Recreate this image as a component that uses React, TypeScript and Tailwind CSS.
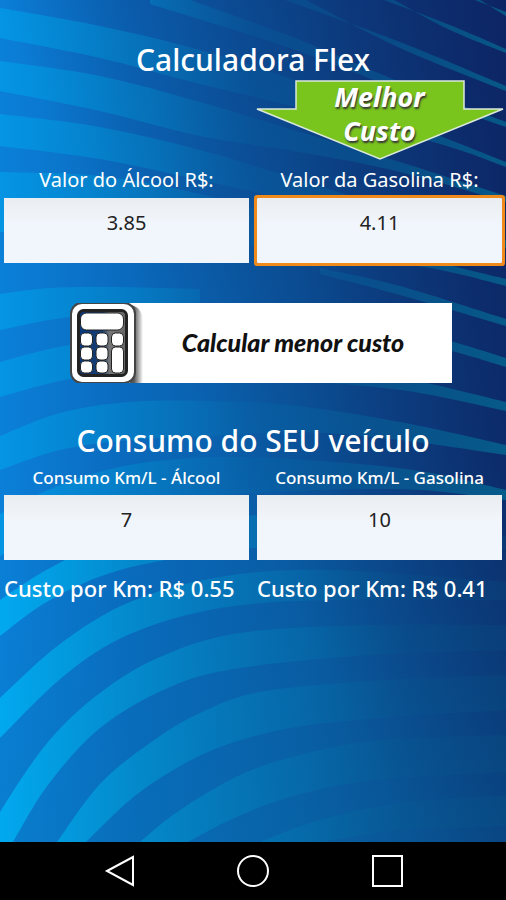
import { useState, type ReactNode } from "react";

type Point = [number, number];

const hand = "font-['Noto_Sans','Open_Sans',sans-serif]";

// Each stripe is described by its upper and lower edge, left to right.
const stripes: { top: Point[]; bottom: Point[] }[] = [
  { top: [[475, 0], [506, 12]], bottom: [[480, 0], [506, 16]] },
  { top: [[384, 0], [450, 25], [506, 49]], bottom: [[394, 0], [450, 30], [506, 53]] },
  { top: [[285, 0], [400, 42], [506, 86]], bottom: [[306, 0], [400, 48], [506, 91]] },
  { top: [[150, -14], [290, 36], [400, 82], [506, 122]], bottom: [[150, 4], [290, 48], [400, 90], [506, 127]] },
  { top: [[0, 8], [100, 26], [200, 50], [300, 82], [440, 136], [506, 162]], bottom: [[0, 38], [100, 58], [200, 84], [300, 108], [440, 144], [506, 167]] },
  { top: [[0, 61], [100, 76], [200, 102], [300, 132], [400, 162], [506, 196]], bottom: [[0, 91], [100, 111], [200, 136], [300, 152], [400, 172], [506, 202]] },
  { top: [[0, 114], [100, 127], [200, 150], [300, 180], [420, 218], [506, 240]], bottom: [[0, 146], [100, 159], [200, 180], [300, 202], [420, 228], [506, 248]] },
  { top: [[0, 172], [100, 176], [200, 194], [320, 228], [430, 260], [506, 279]], bottom: [[0, 232], [100, 232], [200, 240], [320, 254], [430, 268], [506, 286]] },
  { top: [[0, 294], [50, 288], [110, 287], [200, 289]], bottom: [[0, 330], [70, 317], [140, 316], [200, 316]] },
  { top: [[320, 268], [400, 286], [506, 319]], bottom: [[320, 274], [400, 295], [506, 326]] },
  { top: [[250, 310], [350, 315], [440, 338], [506, 358]], bottom: [[250, 330], [350, 330], [440, 348], [506, 367]] },
  { top: [[0, 362], [70, 345], [150, 340], [260, 350], [400, 377], [506, 402]], bottom: [[0, 397], [70, 379], [150, 372], [260, 378], [400, 390], [506, 411]] },
  { top: [[0, 436], [60, 413], [130, 402], [210, 401], [290, 405], [400, 422], [506, 445]], bottom: [[0, 470], [60, 450], [130, 440], [210, 436], [300, 432], [400, 440], [506, 455]] },
  { top: [[0, 514], [60, 485], [130, 465], [220, 457], [320, 461], [420, 471], [506, 490]], bottom: [[0, 556], [60, 526], [130, 505], [220, 495], [320, 490], [420, 490], [506, 500]] },
  { top: [[0, 600], [50, 568], [120, 536], [220, 518], [330, 516], [506, 536]], bottom: [[0, 636], [50, 600], [120, 570], [220, 552], [330, 544], [506, 550]] },
  { top: [[0, 698], [60, 644], [130, 602], [220, 577], [330, 570], [506, 582]], bottom: [[0, 738], [65, 675], [130, 634], [220, 608], [330, 600], [506, 600]] },
  { top: [[-14, 842], [0, 812], [48, 742], [100, 693], [160, 657], [240, 633], [370, 625], [506, 625]], bottom: [[13, 842], [48, 785], [100, 728], [170, 687], [240, 668], [370, 655], [506, 650]] },
  { top: [[57, 842], [100, 784], [150, 743], [200, 713], [260, 692], [370, 681], [506, 675]], bottom: [[86, 842], [130, 800], [170, 772], [220, 747], [290, 728], [380, 718], [506, 710]] },
  { top: [[140, 842], [180, 810], [240, 775], [300, 755], [380, 740], [506, 735]], bottom: [[188, 842], [230, 820], [280, 800], [340, 785], [400, 778], [506, 772]] },
  { top: [[260, 842], [320, 820], [400, 803], [506, 795]], bottom: [[320, 842], [400, 830], [450, 828], [506, 826]] },
];

function curve(points: Point[]) {
  let d = "";
  for (let i = 0; i < points.length - 1; i++) {
    const before = points[Math.max(i - 1, 0)];
    const from = points[i];
    const to = points[i + 1];
    const after = points[Math.min(i + 2, points.length - 1)];
    d += `C${from[0] + (to[0] - before[0]) / 6} ${from[1] + (to[1] - before[1]) / 6} `;
    d += `${to[0] - (after[0] - from[0]) / 6} ${to[1] - (after[1] - from[1]) / 6} ${to[0]} ${to[1]}`;
  }
  return d;
}

function outline({ top, bottom }: { top: Point[]; bottom: Point[] }) {
  const back = [...bottom].reverse();
  return `M${top[0].join(" ")}${curve(top)}L${back[0].join(" ")}${curve(back)}Z`;
}

function Backdrop() {
  return (
    <svg aria-hidden="true" viewBox="0 0 506 842" preserveAspectRatio="none" className="absolute inset-0 -z-10 h-full w-full">
      <defs>
        <linearGradient id="base" x1="0" y1="0" x2="1" y2="0">
          <stop offset="0" stopColor="#0b80d9" />
          <stop offset="0.25" stopColor="#0a6abd" />
          <stop offset="0.6" stopColor="#0a589f" />
          <stop offset="0.85" stopColor="#0b4283" />
          <stop offset="1" stopColor="#0b3370" />
        </linearGradient>
        <linearGradient id="night" x1="0.4" y1="0.5" x2="1" y2="0">
          <stop offset="0" stopColor="#0e1f60" stopOpacity="0" />
          <stop offset="1" stopColor="#0e1f60" stopOpacity="0.7" />
        </linearGradient>
        <linearGradient id="sea" x1="0" y1="0" x2="0" y2="1">
          <stop offset="0.55" stopColor="#0478c0" stopOpacity="0" />
          <stop offset="1" stopColor="#0478b4" stopOpacity="0.3" />
        </linearGradient>
        <linearGradient id="stripe" gradientUnits="userSpaceOnUse" x1="0" y1="0" x2="506" y2="0">
          <stop offset="0" stopColor="#00a0ea" stopOpacity="0.65" />
          <stop offset="0.3" stopColor="#0090cc" stopOpacity="0.38" />
          <stop offset="0.5" stopColor="#0078b0" stopOpacity="0.15" />
          <stop offset="0.7" stopColor="#007cae" stopOpacity="0.25" />
          <stop offset="1" stopColor="#008aa8" stopOpacity="0.5" />
        </linearGradient>
        <linearGradient id="fading" gradientUnits="userSpaceOnUse" x1="0" y1="0" x2="506" y2="0">
          <stop offset="0" stopColor="#00b0f4" stopOpacity="0.85" />
          <stop offset="0.3" stopColor="#009cd4" stopOpacity="0.55" />
          <stop offset="0.6" stopColor="#0080b4" stopOpacity="0.28" />
          <stop offset="0.8" stopColor="#007090" stopOpacity="0.08" />
          <stop offset="1" stopColor="#007090" stopOpacity="0.12" />
        </linearGradient>
      </defs>
      <rect width="506" height="842" fill="url(#base)" />
      <rect width="506" height="842" fill="url(#night)" />
      <rect width="506" height="842" fill="url(#sea)" />
      {stripes.map((stripe, i) => (
        <path key={i} d={outline(stripe)} fill={i < 14 ? "url(#stripe)" : "url(#fading)"} />
      ))}
    </svg>
  );
}

function Field({ id, label, small, value, onChange, focused }: {
  id: string;
  label: ReactNode;
  small?: boolean;
  value: string;
  onChange: (value: string) => void;
  focused?: boolean;
}) {
  return (
    <div className="flex min-w-0 flex-col text-center">
      <label htmlFor={id} className={`whitespace-nowrap text-white ${small ? "text-[17px] leading-[34px] font-medium" : "text-[20px] leading-[36px]"}`}>
        {label}
      </label>
      <input
        id={id}
        inputMode="decimal"
        value={value}
        onChange={(e) => onChange(e.target.value)}
        className={`h-[65px] w-full bg-linear-to-b from-[#eaedf0] to-[#f1f6fc] to-40% pb-4 text-center text-[20px] text-[#222] outline-none ${focused ? "rounded-[1px] shadow-[0_0_0_3px_#ef8a1b]" : ""}`}
      />
    </div>
  );
}

function BestBadge() {
  return (
    <div className="relative -mx-1 h-[82px] text-center">
      <svg aria-hidden="true" viewBox="0 0 253 82" preserveAspectRatio="none" className="absolute inset-0 h-full w-full">
        <path d="M43 1H211V29H250L127 79L4 29H43Z" fill="#7ac51d" stroke="#dbe8dc" strokeWidth="1.5" />
      </svg>
      <p className="relative text-[27px] leading-[34px] font-bold text-white italic [text-shadow:1px_2px_2px_#333]">
        Melhor
        <br />
        Custo
      </p>
    </div>
  );
}

function CalculatorIcon() {
  return (
    <svg aria-hidden="true" viewBox="0 0 76 80" className="h-20 w-[76px] shrink-0">
      <defs>
        <linearGradient id="edge" gradientUnits="userSpaceOnUse" x1="64" y1="0" x2="73" y2="0">
          <stop offset="0" stopColor="#444" stopOpacity="0.9" />
          <stop offset="1" stopColor="#444" stopOpacity="0" />
        </linearGradient>
        <linearGradient id="body" x1="0" x2="1">
          <stop offset="0" stopColor="#08377c" />
          <stop offset="0.5" stopColor="#173e70" />
          <stop offset="0.65" stopColor="#777" />
          <stop offset="1" stopColor="#666" />
        </linearGradient>
      </defs>
      <rect x="58" width="18" height="80" fill="#fff" />
      <path d="M62 2Q73 6 73 18V80H60Z" fill="url(#edge)" />
      <rect x="1" y="0" width="64" height="80" rx="11" fill="#fff" stroke="#444" strokeWidth="2" />
      <rect x="8.500" y="7.500" width="48" height="65" rx="5" fill="url(#body)" stroke="#222" strokeWidth="3" />
      <g fill="#fff" stroke="#222" strokeWidth="1">
        <rect x="10.500" y="10" width="43" height="17" rx="6" />
        <rect x="10.500" y="30" width="12" height="13" rx="4" />
        <rect x="26" y="30" width="12" height="13" rx="4" />
        <rect x="41.500" y="30" width="12" height="13" rx="4" />
        <rect x="10.500" y="44" width="12" height="13" rx="4" />
        <rect x="26" y="44" width="12" height="13" rx="4" />
        <rect x="41.500" y="44" width="12" height="26" rx="4" />
        <rect x="10.500" y="58" width="12" height="12" rx="4" />
        <rect x="26" y="58" width="12" height="12" rx="4" />
      </g>
    </svg>
  );
}

function NavButton({ label, children }: { label: string; children: ReactNode }) {
  return (
    <button type="button" aria-label={label} className="size-8">
      <svg aria-hidden="true" viewBox="0 0 32 32" className="size-8" fill="none" stroke="#fff" strokeWidth="2">
        {children}
      </svg>
    </button>
  );
}

export default function App() {
  const [alcohol, setAlcohol] = useState("3.85");
  const [gasoline, setGasoline] = useState("4.11");
  const [alcoholKm, setAlcoholKm] = useState("7");
  const [gasolineKm, setGasolineKm] = useState("10");

  return (
    <div className={`flex min-h-screen flex-col bg-black ${hand}`}>
      <main className="relative isolate flex-1 overflow-hidden pt-10">
        <Backdrop />
        <h1 className="text-center text-[30px] leading-[40px] font-medium text-white">Calculadora Flex</h1>
        <div className="grid grid-cols-2 gap-x-2 px-1">
          <div className="col-start-2">
            <BestBadge />
          </div>
          <Field id="alcohol" label="Valor do Álcool R$:" value={alcohol} onChange={setAlcohol} />
          <Field id="gasoline" label="Valor da Gasolina R$:" value={gasoline} onChange={setGasoline} focused />
        </div>
        <div className="mt-10 pr-[54px] pl-[70px]">
          <button type="button" className="flex h-20 w-full items-center">
            <CalculatorIcon />
            <span className="flex h-full flex-1 items-center justify-center bg-white pr-3 font-['Lato','Noto_Sans',sans-serif] text-[25px] font-black whitespace-nowrap text-[#111] italic">
              Calcular menor custo
            </span>
          </button>
        </div>
        <h2 className="mt-[38px] text-center text-[30px] leading-[40px] font-medium text-white">Consumo do SEU veículo</h2>
        <div className="grid grid-cols-2 gap-x-2 px-1">
          <Field id="alcohol-km" label="Consumo Km/L - Álcool" small value={alcoholKm} onChange={setAlcoholKm} />
          <Field id="gasoline-km" label="Consumo Km/L - Gasolina" small value={gasolineKm} onChange={setGasolineKm} />
          <p className="mt-3.5 text-[22px] leading-[28px] font-medium whitespace-nowrap text-white">Custo por Km: R$ 0.55</p>
          <p className="mt-3.5 text-[22px] leading-[28px] font-medium whitespace-nowrap text-white">Custo por Km: R$ 0.41</p>
        </div>
      </main>
      <nav className="flex h-[58px] shrink-0 items-center justify-center gap-[102px] bg-black">
        <NavButton label="Voltar">
          <path d="M4 16L30 2V30Z" />
        </NavButton>
        <NavButton label="Início">
          <circle cx="16" cy="16" r="15" />
        </NavButton>
        <NavButton label="Recentes">
          <path d="M2 1H31V31H2Z" />
        </NavButton>
      </nav>
    </div>
  );
}
